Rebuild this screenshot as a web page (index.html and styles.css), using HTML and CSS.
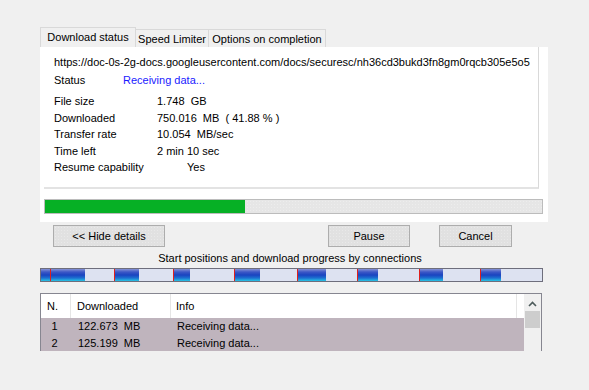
FILE: index.html
```html
<!DOCTYPE html>
<html lang="en">
<head>
  <meta charset="UTF-8" />
  <title>Download status</title>
  <link rel="stylesheet" href="styles.css">
</head>
<body>

<div class="window">
  <div class="tabs">
    <div class="tab active">Download status</div>
    <div class="tab">Speed Limiter</div>
    <div class="tab">Options on completion</div>
  </div>

  <div class="panel">
    <div class="info">
      <div class="url">https://doc-0s-2g-docs.googleusercontent.com/docs/securesc/nh36cd3bukd3fn8gm0rqcb305e5o5</div>
      <div class="status-row"><span>Status</span><span class="status-value">Receiving data...</span></div>
      <div class="details">
        <span>File size</span><span>1.748&nbsp; GB</span>
        <span>Downloaded</span><span>750.016&nbsp; MB&nbsp; ( 41.88 % )</span>
        <span>Transfer rate</span><span>10.054&nbsp; MB/sec</span>
        <span>Time left</span><span>2 min 10 sec</span>
        <span>Resume capability</span><span class="yes">Yes</span>
      </div>
    </div>
    <div class="progress"><div class="progress-fill" style="width: 40.3%"></div></div>
  </div>

  <div class="buttons">
    <button class="btn hide-btn">&lt;&lt; Hide details</button>
    <button class="btn pause-btn">Pause</button>
    <button class="btn cancel-btn">Cancel</button>
  </div>

  <div class="caption">Start positions and download progress by connections</div>

  <div class="conn-bar">
    <div class="seg fill" style="width: 9px"></div>
    <div class="seg start fill" style="width: 35px"></div><div class="seg" style="width: 29px"></div>
    <div class="seg start fill" style="width: 25px"></div><div class="seg" style="width: 34px"></div>
    <div class="seg start fill" style="width: 17px"></div><div class="seg" style="width: 44px"></div>
    <div class="seg start fill" style="width: 26px"></div><div class="seg" style="width: 37px"></div>
    <div class="seg start fill" style="width: 29px"></div><div class="seg" style="width: 31px"></div>
    <div class="seg start fill" style="width: 21px"></div><div class="seg" style="width: 41px"></div>
    <div class="seg start fill" style="width: 24px"></div><div class="seg" style="width: 37px"></div>
    <div class="seg start fill" style="width: 21px"></div><div class="seg" style="width: 40px"></div>
  </div>

  <div class="list">
    <div class="list-body">
      <div class="list-head">
        <div class="col-n">N.</div>
        <div class="col-dl">Downloaded</div>
        <div class="col-info">Info</div>
      </div>
      <div class="list-row">
        <div class="col-n num">1</div>
        <div class="col-dl">122.673&nbsp; MB</div>
        <div class="col-info">Receiving data...</div>
      </div>
      <div class="list-row">
        <div class="col-n num">2</div>
        <div class="col-dl">125.199&nbsp; MB</div>
        <div class="col-info">Receiving data...</div>
      </div>
    </div>
    <div class="scrollbar">
      <svg class="arrow" width="9" height="6" viewBox="0 0 9 6"><path d="M1 5 L4.5 1.5 L8 5" fill="none" stroke="#4d5b5b" stroke-width="1.6"/></svg>
      <div class="thumb"></div>
    </div>
  </div>
</div>

</body>
</html>
```

FILE: styles.css
```css
* {
  box-sizing: border-box;
}

body {
  margin: 0;
  background-color: #f0f0f0;
  font-family: 'Liberation Sans', Arial, sans-serif;
  font-size: 11px;
  color: #000;
}

.window {
  padding: 27px 0 0 40px;
  width: 548px;
}

.tabs {
  display: flex;
  align-items: flex-end;
  height: 20px;
  white-space: nowrap;
}

.tab {
  height: 18px;
  line-height: 18px;
  padding: 0;
  text-align: center;
  overflow: hidden;
  border: 1px solid #d9d9d9;
  border-bottom: none;
  border-left: none;
  background-color: #f0f0f0;
}

.tab.active {
  height: 20px;
  line-height: 18px;
  width: 96px;
  border-left: 1px solid #d9d9d9;
}

.tab:nth-child(2) { width: 73px; }
.tab:nth-child(3) { width: 117px; }

.panel {
  background-color: #fff;
  height: 175px;
  padding: 0 5px 0 4px;
}

.info {
  width: 495px;
  height: 142px;
  padding: 7px 0 0 10px;
  border-right: 1px solid #d9d9d9;
  border-bottom: 2px solid #e3e3e3;
}

.url, .status-row {
  height: 16px;
  line-height: 16px;
  white-space: nowrap;
}

.status-row {
  margin-top: 2px;
  display: grid;
  grid-template-columns: 69px auto;
}

.status-value {
  color: #1a1aff;
}

.details {
  margin-top: 5px;
  display: grid;
  grid-template-columns: 103px auto;
  grid-auto-rows: 16.5px;
  line-height: 16.5px;
  white-space: nowrap;
}

.yes {
  padding-left: 30px;
}

.progress {
  margin-top: 10px;
  height: 15px;
  border: 1px solid #bcbcbc;
  background-color: #e6e6e6;
  background-image: radial-gradient(#ededed 0.6px, transparent 0.8px);
  background-size: 3px 3px;
}

.progress-fill {
  height: 100%;
  background-color: #06b025;
}

.buttons {
  display: flex;
  height: 22px;
  margin-top: 3px;
}

.btn {
  font: inherit;
  height: 22px;
  padding: 0;
  border: 1px solid #adadad;
  background-color: #e1e1e1;
  background-image: radial-gradient(#e9e9e9 0.6px, transparent 0.8px);
  background-size: 3px 3px;
  color: #000;
}

.hide-btn {
  width: 112px;
  margin-left: 13px;
}

.pause-btn {
  width: 82px;
  margin-left: 163px;
}

.cancel-btn {
  width: 73px;
  margin-left: 29px;
}

.caption {
  width: 500px;
  text-align: center;
  height: 15px;
  line-height: 15px;
  margin-top: 4px;
}

.conn-bar {
  display: flex;
  width: 503px;
  height: 14px;
  margin-top: 2px;
  border: 1px solid #6e6e7c;
  background-color: #dde2f1;
}

.seg {
  height: 100%;
  flex-shrink: 0;
}

.seg.fill {
  background: linear-gradient(to bottom, #8592d6 0%, #3d58c6 25%, #1a44c0 50%, #1d6fd0 75%, #27c4e4 100%);
}

.seg.start {
  border-left: 1px solid #e0201c;
}

.list {
  display: flex;
  width: 502px;
  height: 58px;
  margin-top: 11px;
  border: 1px solid #868690;
  border-bottom: none;
  overflow: hidden;
  background-color: #fff;
}

.list-body {
  width: 483px;
}

.list-head {
  display: flex;
  height: 24px;
  line-height: 24px;
  background-color: #fff;
}

.list-head > div {
  border-right: 1px solid #e5e5e5;
}

.list-head .col-info {
  width: 346px;
}

.col-n {
  width: 30px;
  padding-left: 6px;
}

.col-dl {
  width: 100px;
  padding-left: 6px;
}

.col-info {
  padding-left: 5px;
}

.list-row {
  display: flex;
  height: 16.5px;
  line-height: 16.5px;
  background-color: #bfb4bd;
}

.list-row .col-n {
  padding-left: 0;
  text-align: center;
  padding-right: 3px;
}

.list-row .col-dl {
  padding-left: 7px;
}

.list-row .col-info {
  padding-left: 6px;
}

.scrollbar {
  width: 17px;
  background-color: #f0f0f0;
  display: flex;
  flex-direction: column;
  align-items: center;
}

.arrow {
  margin-top: 7px;
}

.thumb {
  width: 15px;
  height: 17px;
  margin-top: 4px;
  background-color: #cdcdcd;
}
```
